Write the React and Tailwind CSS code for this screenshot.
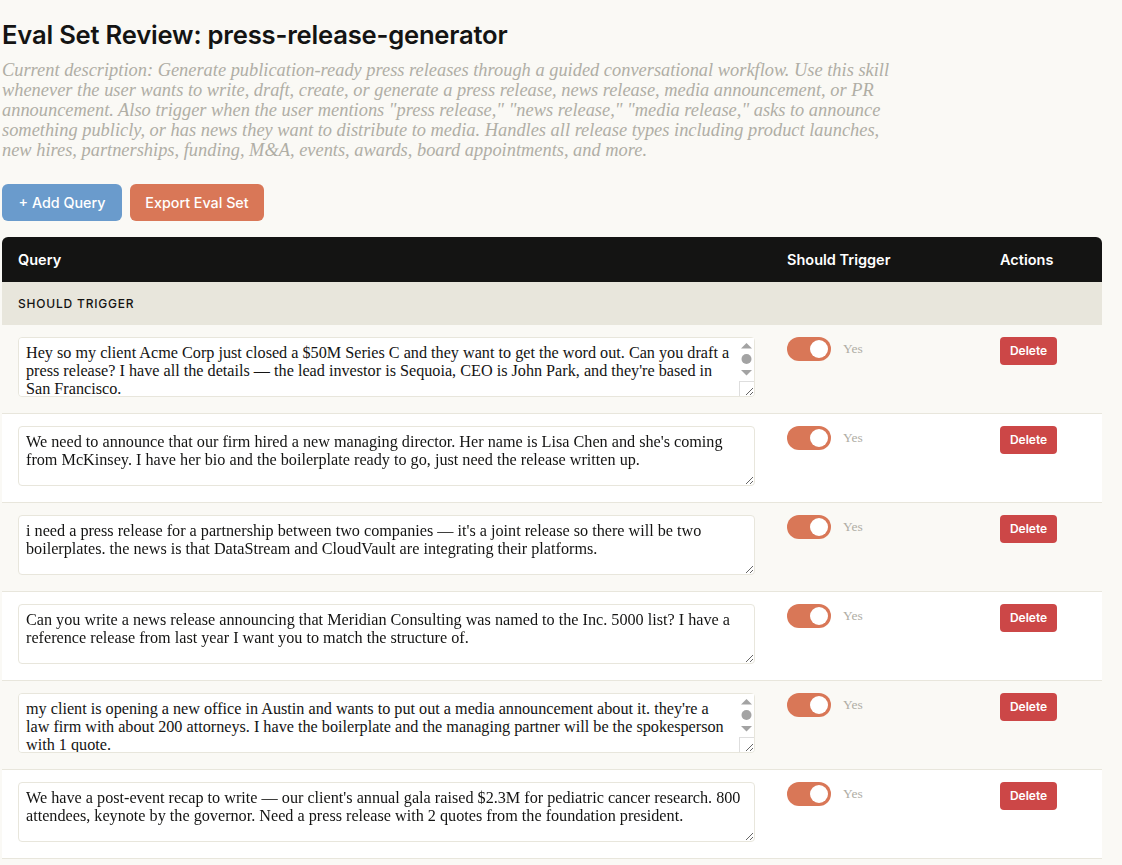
import React, { useState } from "react";

const sans = { fontFamily: "Inter, 'Open Sans', sans-serif" };
const serif = { fontFamily: "'Liberation Serif', 'DejaVu Serif', serif" };

const description = [
  "Current description: Generate publication-ready press releases through a guided conversational workflow. Use this skill",
  "whenever the user wants to write, draft, create, or generate a press release, news release, media announcement, or PR",
  'announcement. Also trigger when the user mentions "press release," "news release," "media release," asks to announce',
  "something publicly, or has news they want to distribute to media. Handles all release types including product launches,",
  "new hires, partnerships, funding, M&A, events, awards, board appointments, and more.",
];

const queries = [
  { text: "Hey so my client Acme Corp just closed a $50M Series C and they want to get the word out. Can you draft a press release? I have all the details — the lead investor is Sequoia, CEO is John Park, and they're based in San Francisco.", long: true },
  { text: "We need to announce that our firm hired a new managing director. Her name is Lisa Chen and she's coming from McKinsey. I have her bio and the boilerplate ready to go, just need the release written up." },
  { text: "i need a press release for a partnership between two companies — it's a joint release so there will be two boilerplates. the news is that DataStream and CloudVault are integrating their platforms." },
  { text: "Can you write a news release announcing that Meridian Consulting was named to the Inc. 5000 list? I have a reference release from last year I want you to match the structure of." },
  { text: "my client is opening a new office in Austin and wants to put out a media announcement about it. they're a law firm with about 200 attorneys. I have the boilerplate and the managing partner will be the spokesperson with 1 quote.", long: true },
  { text: "We have a post-event recap to write — our client's annual gala raised $2.3M for pediatric cancer research. 800 attendees, keynote by the governor. Need a press release with 2 quotes from the foundation president." },
];

const Toggle = ({ on, onClick }) => (
  <button
    onClick={onClick}
    className={`relative w-[44px] h-[24px] rounded-full shrink-0 ${on ? "bg-[#d97757]" : "bg-[#b0aea5]"}`}
  >
    <span
      className={`absolute top-[3px] w-[18px] h-[18px] rounded-full bg-white ${on ? "left-[23px]" : "left-[3px]"}`}
    />
  </button>
);

// classic scrollbar look for the overflowing textareas
const FakeScrollbar = () => (
  <svg
    className="absolute right-[1px] top-[1px] pointer-events-none"
    width="15"
    height="58"
    viewBox="0 0 15 58"
  >
    <rect x="0" y="0" width="15" height="43" fill="#fff" />
    <polygon points="2,10.5 7.5,5 13,10.5" fill="#a3a3a3" />
    <circle cx="7.5" cy="21" r="5" fill="#a3a3a3" />
    <polygon points="2,32 13,32 7.5,37.5" fill="#a3a3a3" />
    <line x1="0" y1="43.5" x2="15" y2="43.5" stroke="#dedede" />
    <line x1="0.5" y1="43.5" x2="0.5" y2="58" stroke="#dedede" />
  </svg>
);

const Row = ({ query, index }) => {
  const [on, setOn] = useState(true);
  return (
    <div
      className={`flex border-b border-[#e8e6dc] ${index % 2 === 0 ? "bg-[#faf9f5]" : "bg-white"}`}
    >
      <div className="w-[769px] pl-4 pr-4 pt-3 pb-4">
        <div className="relative w-[737px]">
          <textarea
            defaultValue={query.text}
            style={serif}
            className={`block w-[737px] h-[60px] pl-[7px] py-[6px] text-[16.2px] leading-[18px] text-[#141413] bg-white border border-[#e8e6dc] rounded-[4px] outline-none ${
              query.long ? "pr-[22px]" : "pr-[7px]"
            }`}
          />
          {query.long && <FakeScrollbar />}
        </div>
      </div>
      <div className="w-[213px] pl-4 pt-3 flex items-start gap-3">
        <Toggle on={on} onClick={() => setOn(!on)} />
        <span style={serif} className="text-[13.5px] leading-[24px] text-[#b0aea5]">
          {on ? "Yes" : "No"}
        </span>
      </div>
      <div className="flex-1 pl-4 pt-3">
        <button
          style={sans}
          className="h-[28px] w-[57px] rounded-[4px] bg-[#cc4747] text-white text-[12px] font-semibold"
        >
          Delete
        </button>
      </div>
    </div>
  );
};

export default function App() {
  return (
    <div className="min-h-screen bg-[#faf9f5] pl-[2px] pt-[18px]">
      <h1 style={sans} className="text-[25.6px] leading-[34px] font-semibold text-[#141413] tracking-[-0.2px]">
        Eval Set Review: press-release-generator
      </h1>

      <p style={serif} className="mt-[8px] italic text-[18.4px] leading-[20px] text-[#b0aea5]">
        {description.map((line, i) => (
          <span key={i} className="block whitespace-nowrap">
            {line}
          </span>
        ))}
      </p>

      {/* Buttons */}
      <div className="flex gap-2 mt-[24px]" style={sans}>
        <button className="h-[37px] w-[120px] rounded-[6px] bg-[#6a9bcc] text-white text-[14.3px] font-medium">
          + Add Query
        </button>
        <button className="h-[37px] w-[134px] rounded-[6px] bg-[#d97757] text-white text-[14.3px] font-medium">
          Export Eval Set
        </button>
      </div>

      {/* Table */}
      <div className="mt-4 w-[1100px]">
        <div
          style={sans}
          className="flex h-[45px] items-center bg-[#141413] text-white text-[14.5px] font-semibold rounded-t-[6px]"
        >
          <div className="w-[769px] pl-4">Query</div>
          <div className="w-[213px] pl-4">Should Trigger</div>
          <div className="flex-1 pl-4">Actions</div>
        </div>
        <div
          style={sans}
          className="h-[43px] flex items-center pl-4 bg-[#e8e6dc] text-[12px] font-medium tracking-[0.8px] text-[#141413]"
        >
          SHOULD TRIGGER
        </div>
        {queries.map((q, i) => (
          <Row key={i} query={q} index={i} />
        ))}
      </div>
    </div>
  );
}
